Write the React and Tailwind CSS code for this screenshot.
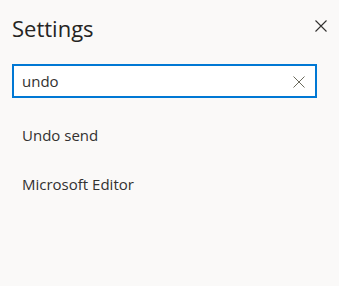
export default function App() {
  const font = { fontFamily: '"Open Sans", "Noto Sans", sans-serif' };
  return (
    <div className="w-[339px] h-[286px] bg-[#faf9f8] flex flex-col" style={font}>
      <div className="flex justify-between pl-[12px] pr-[12px] pt-[14px]">
        <div className="h-[28px] text-[22px] leading-[28px] text-[#252423]">Settings</div>
        <button className="mt-[6px] w-[12px] h-[12px] p-0 block">
          <svg width="12" height="12" viewBox="0 0 12 12" className="block">
            <path d="M0.5 0.5 L11.5 11.5 M11.5 0.5 L0.5 11.5" stroke="#323130" strokeWidth="1.1" fill="none" />
          </svg>
        </button>
      </div>
      <div className="mt-[22px] ml-[12px] w-[305px] h-[34px] bg-white border-2 border-[#0078d4] flex items-center pl-[8px] pr-[10px]">
        <div className="flex-1 text-[15px] leading-[20px] text-[#323130]">undo</div>
        <svg width="12" height="12" viewBox="0 0 12 12" className="block mt-[1px]">
          <path d="M0.5 0.5 L11.5 11.5 M11.5 0.5 L0.5 11.5" stroke="#6b6a5c" strokeWidth="1" fill="none" />
        </svg>
      </div>
      <div className="mt-[12px] flex flex-col">
        <div className="h-[49px] flex items-center pl-[22px] text-[15px] leading-[20px] text-[#323130]">Undo send</div>
        <div className="h-[49px] flex items-center pl-[22px] text-[15px] leading-[20px] text-[#323130]">Microsoft Editor</div>
      </div>
    </div>
  );
}
